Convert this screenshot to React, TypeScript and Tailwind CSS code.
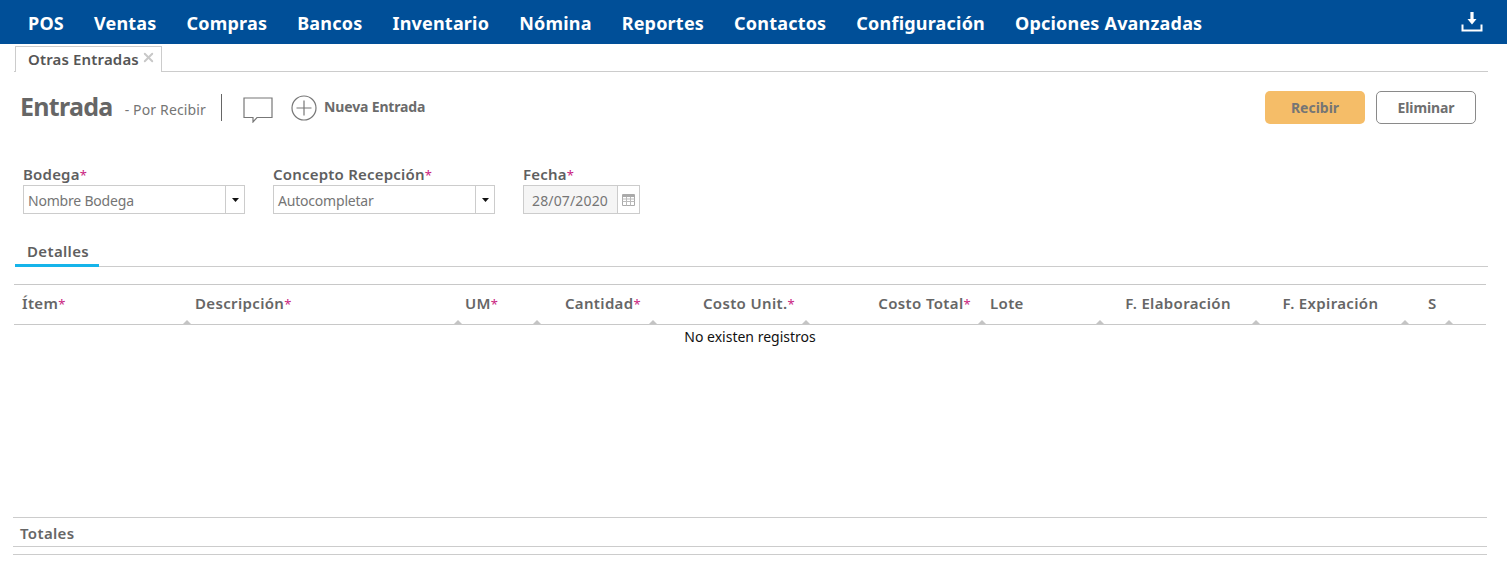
import * as React from "react";
import { X } from "lucide-react";

const font = "font-['Noto_Sans','Open_Sans',sans-serif]";

const menu = ["POS", "Ventas", "Compras", "Bancos", "Inventario", "Nómina", "Reportes", "Contactos", "Configuración", "Opciones Avanzadas"];

const columns = [
  { label: "Ítem", req: true, cell: "w-[173px] pl-2" },
  { label: "Descripción", req: true, cell: "w-[271px] pl-2" },
  { label: "UM", req: true, cell: "w-[79px] pl-[7px]" },
  { label: "Cantidad", req: true, cell: "w-[116px] justify-end pr-[12px]" },
  { label: "Costo Unit.", req: true, cell: "w-[153px] justify-end pr-[11px]" },
  { label: "Costo Total", req: true, cell: "w-[176px] justify-end pr-[11px]" },
  { label: "Lote", req: false, cell: "w-[118px] pl-2" },
  { label: "F. Elaboración", req: false, cell: "w-[156px] justify-center" },
  { label: "F. Expiración", req: false, cell: "w-[149px] justify-center" },
  { label: "S", req: false, cell: "w-[44px] pl-[23px]" },
];

function Req() {
  return <span className="text-[13px] font-normal text-[#c9237f]">*</span>;
}

function Arrow() {
  return (
    <svg width="7" height="4" viewBox="0 0 7 4">
      <path d="M0 0 H7 L3.5 4 Z" fill="#111" />
    </svg>
  );
}

function Combo({ value }: { value: string }) {
  return (
    <div className="flex h-[29px] w-[222px] border border-[#cccccc] bg-white">
      <div className="flex-1 pl-[4px] text-[14px] leading-[29px] tracking-[-0.2px] text-[#757575]">{value}</div>
      <div className="flex w-[19px] items-center justify-center border-l border-[#cccccc]">
        <Arrow />
      </div>
    </div>
  );
}

export default function App() {
  return (
    <div className={`${font} h-[580px] w-[1507px] overflow-hidden bg-white`}>
      {/* Top menu */}
      <nav className="flex h-[44px] items-center bg-[#004f98] pl-[28px] pr-[24px] text-white">
        <ul className="flex flex-1 gap-[30px] pt-[2px]">
          {menu.map((m) => (
            <li key={m} className="text-[18px] font-bold tracking-[0.2px]">{m}</li>
          ))}
        </ul>
        <svg width="22" height="22" viewBox="0 0 22 22" fill="none">
          <path d="M11 1 V10" stroke="#fff" strokeWidth="3.2" />
          <path d="M6.5 8 H15.5 L11 13.5 Z" fill="#fff" />
          <path d="M1.5 13.5 V19.5 H20.5 V13.5" stroke="#fff" strokeWidth="2" />
        </svg>
      </nav>

      {/* Tabs */}
      <div className="ml-[14px] mr-[19px] flex h-[28px] items-end border-b border-[#cccccc]">
        <div className="mb-[-1px] ml-[1px] flex h-[26px] items-center border border-b-0 border-[#cccccc] bg-white pl-[12px] pr-[5px]">
          <span className="text-[15px] font-semibold tracking-[0.15px] text-[#555555]">Otras Entradas</span>
          <X size={15} strokeWidth={3} className="-mt-[4px] ml-[2px] text-[#c8c8c8]" />
        </div>
      </div>

      {/* Title row */}
      <div className="mt-[19px] flex h-[33px] items-center pl-[20px] pr-[31px]">
        <h1 className="mb-[2px] text-[25px] font-bold tracking-[-0.7px] text-[#666666]">Entrada</h1>
        <span className="ml-[12px] mt-[3px] text-[14px] tracking-[0.15px] text-[#757575]">- Por Recibir</span>
        <div className="ml-[15px] h-[27px] w-px bg-[#666666]" />
        <svg width="30" height="26" viewBox="0 0 30 26" fill="none" className="ml-[21px] mt-[4px]">
          <path d="M1 1 H29 V20.5 H14 L10 25 V20.5 H1 Z" stroke="#777" strokeWidth="1.2" />
        </svg>
        <svg width="26" height="26" viewBox="0 0 26 26" fill="none" className="ml-[18px]">
          <circle cx="13" cy="13" r="12" stroke="#777" strokeWidth="1.2" />
          <path d="M13 5.5 V20.5 M5.5 13 H20.5" stroke="#777" strokeWidth="1.2" />
        </svg>
        <span className="mb-[2px] ml-[7px] text-[14px] font-bold tracking-[-0.15px] text-[#6b6b6b]">Nueva Entrada</span>
        <div className="ml-auto flex gap-[11px]">
          <button className="h-[33px] w-[100px] rounded-[5px] bg-[#f5bd68] text-[14px] font-bold text-[#757575]">Recibir</button>
          <button className="h-[33px] w-[100px] rounded-[5px] border border-[#8a8a8a] bg-white text-[14px] font-bold tracking-[-0.1px] text-[#6f6f6f]">Eliminar</button>
        </div>
      </div>

      {/* Form */}
      <div className="ml-[23px] mt-[40px] flex gap-[28px] text-[14px]">
        <div>
          <label className="block h-[21px] text-[15px] font-semibold leading-[21px] tracking-[0.2px] text-[#5f5f5f]">Bodega<Req /></label>
          <Combo value="Nombre Bodega" />
        </div>
        <div>
          <label className="block h-[21px] text-[15px] font-semibold leading-[21px] tracking-[0.2px] text-[#5f5f5f]">Concepto Recepción<Req /></label>
          <Combo value="Autocompletar" />
        </div>
        <div>
          <label className="block h-[21px] text-[15px] font-semibold leading-[21px] tracking-[0.2px] text-[#5f5f5f]">Fecha<Req /></label>
          <div className="flex h-[29px] w-[117px] border border-[#cccccc] bg-[#f5f5f5]">
            <div className="flex-1 pl-[8px] leading-[29px] tracking-[0.15px] text-[#757575]">28/07/2020</div>
            <div className="flex w-[22px] items-center justify-center border-l border-[#cccccc] bg-white">
              <svg width="13" height="12" viewBox="0 0 13 12">
                <path d="M0.5 0.5 H12.5 V11.5 H0.5 Z" fill="none" stroke="#aaa" />
                <path d="M0.5 1 H12.5 V3 H0.5 Z" fill="#aaa" />
                <path d="M0.5 5 H12.5 M0.5 7.5 H12.5 M4.5 3 V11.5 M8.5 3 V11.5" stroke="#bbb" />
              </svg>
            </div>
          </div>
        </div>
      </div>

      {/* Detail tab */}
      <div className="ml-[15px] mr-[19px] mt-[25px] h-[28px] border-b border-[#cccccc]">
        <div className="h-[28px] w-[84px] border-b-[3px] border-[#16b4ea] pl-[12px] text-[15px] font-semibold leading-[24px] tracking-[0.35px] text-[#5f5f5f]">
          Detalles
        </div>
      </div>

      {/* Grid */}
      <div className="ml-[14px] mr-[21px] mt-[17px] h-[233px] border-t border-[#c8c8c8]">
        <div className="flex h-[40px] border-b border-[#c8c8c8]">
          {columns.map((c) => (
            <div key={c.label} className={`relative flex h-[39px] items-center pb-[2px] text-[15px] font-semibold tracking-[0.35px] text-[#666666] ${c.cell}`}>
              <span>{c.label}{c.req && <Req />}</span>
              <span className="absolute -right-[4px] bottom-0 h-0 w-0 border-x-[4px] border-b-[4px] border-x-transparent border-b-[#c4c4c4]" />
            </div>
          ))}
        </div>
        <p className="pt-[3px] text-center text-[14px] leading-[18px] text-[#111111]">No existen registros</p>
      </div>

      {/* Totals */}
      <div className="ml-[13px] mr-[20px] border-t border-[#cccccc]">
        <div className="h-[29px] border-b border-[#cccccc] pl-[7px] text-[15px] font-semibold leading-[31px] tracking-[0.35px] text-[#666666]">Totales</div>
        <div className="h-[8px] border-b border-[#cccccc]" />
      </div>
    </div>
  );
}
